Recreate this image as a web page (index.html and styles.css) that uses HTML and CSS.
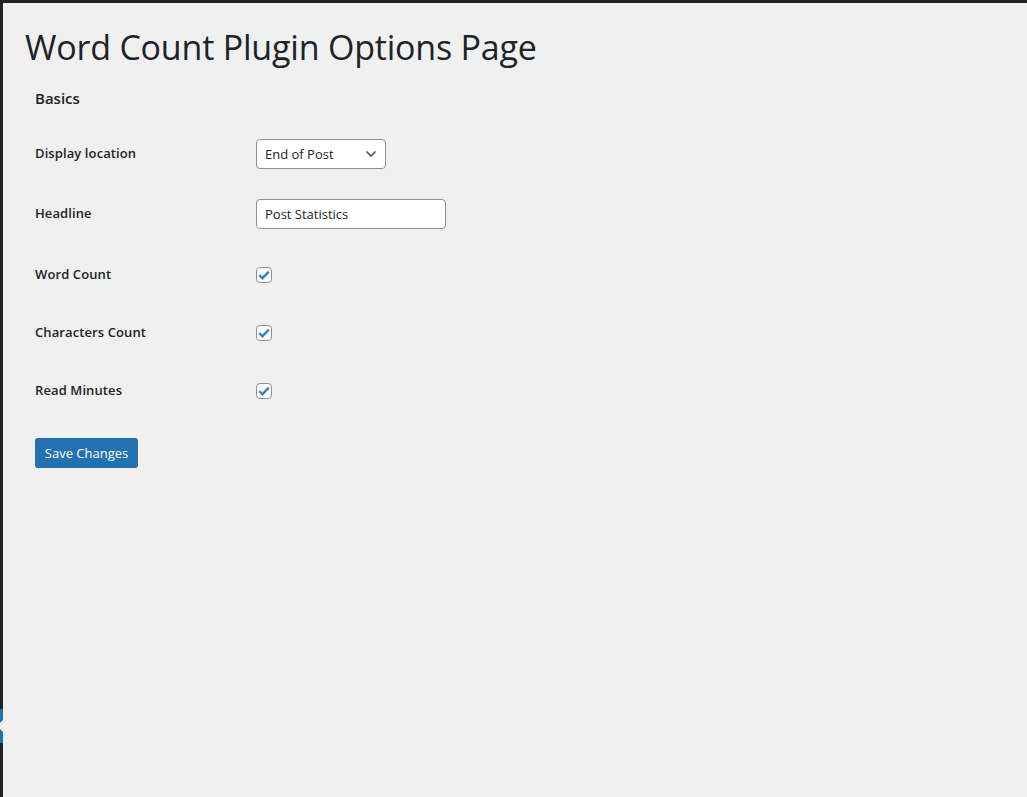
FILE: index.html
```html
<!DOCTYPE html>
<html>
<head>
<meta charset="utf-8">
<link rel="stylesheet" href="styles.css">
</head>
<body>
<div class="frame">
  <div class="menu-marker"><span class="notch"></span></div>
  <div class="wrap">
    <h1 class="page-title">Word Count Plugin Options Page</h1>
    <form class="settings">
      <h2 class="section-title">Basics</h2>
      <div class="row">
        <div class="label">Display location</div>
        <div class="field">
          <div class="select"><span>End of Post</span>
            <svg class="chev" width="12" height="8" viewBox="0 0 12 8"><path d="M1.5 1.5 L6 6 L10.5 1.5" fill="none" stroke="#50575e" stroke-width="1.6"/></svg>
          </div>
        </div>
      </div>
      <div class="row">
        <div class="label">Headline</div>
        <div class="field"><div class="input">Post Statistics</div></div>
      </div>
      <div class="row row-check">
        <div class="label">Word Count</div>
        <div class="field"><span class="checkbox"><svg width="12" height="10" viewBox="0 0 12 10"><path d="M1.3 5.2 L4.5 8.2 L10.8 1.6" fill="none" stroke="#3582c4" stroke-width="2.4"/></svg></span></div>
      </div>
      <div class="row row-check tight">
        <div class="label">Characters Count</div>
        <div class="field"><span class="checkbox"><svg width="12" height="10" viewBox="0 0 12 10"><path d="M1.3 5.2 L4.5 8.2 L10.8 1.6" fill="none" stroke="#3582c4" stroke-width="2.4"/></svg></span></div>
      </div>
      <div class="row row-check tight">
        <div class="label">Read Minutes</div>
        <div class="field"><span class="checkbox"><svg width="12" height="10" viewBox="0 0 12 10"><path d="M1.3 5.2 L4.5 8.2 L10.8 1.6" fill="none" stroke="#3582c4" stroke-width="2.4"/></svg></span></div>
      </div>
      <div class="actions"><span class="button">Save Changes</span></div>
    </form>
  </div>
</div>
</body>
</html>
```
FILE: styles.css
```css
html, body {
  margin: 0;
  padding: 0;
  background: #f0f0f1;
}
body {
  font-family: "Open Sans", "Noto Sans", sans-serif;
  color: #1d2327;
}
.frame {
  position: relative;
  box-sizing: border-box;
  height: 797px;
  border-top: 3px solid #1d2327;
  border-left: 3px solid #1d2327;
  background: #f0f0f1;
}
.menu-marker {
  position: absolute;
  left: -3px;
  top: 706px;
  width: 3px;
  height: 34px;
  background: #2271b1;
  overflow: hidden;
}
.menu-marker .notch {
  position: absolute;
  right: 0;
  top: 11px;
  width: 0;
  height: 0;
  border-top: 6px solid transparent;
  border-bottom: 6px solid transparent;
  border-right: 6px solid #f0f0f1;
}
.wrap {
  padding: 0 0 0 22px;
}
.page-title {
  margin: 0;
  padding-top: 23px;
  font-size: 34px;
  font-weight: 400;
  line-height: 42px;
  letter-spacing: -0.2px;
}
.settings {
  padding-left: 10px;
}
.section-title {
  margin: 0;
  padding-top: 20px;
  font-size: 15px;
  font-weight: 600;
  line-height: 20px;
  height: 51px;
}
.row {
  display: flex;
  align-items: center;
  height: 30px;
  margin-bottom: 30px;
}
.row-check {
  height: 31px;
}
.tight {
  margin-top: -3px;
}
.label {
  width: 221px;
  font-size: 13px;
  font-weight: 600;
  letter-spacing: 0.1px;
  margin-top: -2px;
}
.field {
  display: flex;
  align-items: center;
}
.select {
  box-sizing: border-box;
  width: 130px;
  height: 30px;
  border: 1px solid #8c8f94;
  border-radius: 4px;
  background: #fff;
  display: flex;
  align-items: center;
  justify-content: space-between;
  padding: 0 8px 0 8px;
  font-size: 13px;
}
.input {
  box-sizing: border-box;
  width: 190px;
  height: 30px;
  border: 1px solid #8c8f94;
  border-radius: 4px;
  background: #fff;
  display: flex;
  align-items: center;
  padding: 0 8px;
  font-size: 13px;
}
.checkbox {
  box-sizing: border-box;
  width: 16px;
  height: 16px;
  border: 1px solid #8c8f94;
  border-radius: 4px;
  background: #fff;
  display: flex;
  align-items: center;
  justify-content: center;
}
.actions {
  padding-top: 2px;
}
.button {
  display: inline-flex;
  align-items: center;
  justify-content: center;
  box-sizing: border-box;
  width: 103px;
  height: 30px;
  background: #2271b1;
  border-radius: 3px;
  color: #fff;
  font-size: 13px;
}
```
